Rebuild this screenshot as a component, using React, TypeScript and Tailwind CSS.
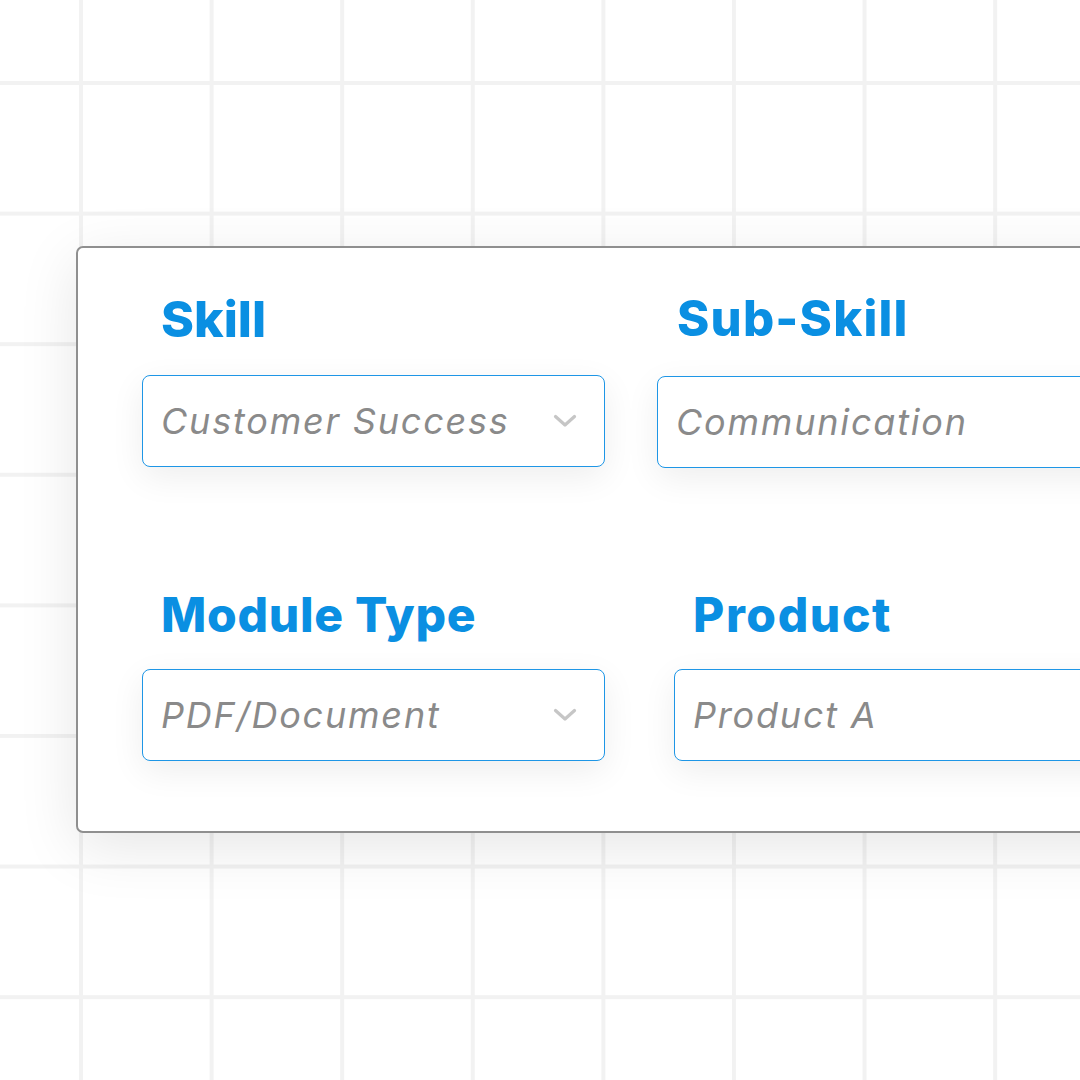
import React from "react";

const Chevron = () => (
  <svg width="24" height="14" viewBox="0 0 24 14" fill="none" className="shrink-0">
    <path d="M2.5 2.5 L12 11 L21.5 2.5" stroke="#c6c6c6" strokeWidth="3.2" strokeLinecap="round" strokeLinejoin="round" />
  </svg>
);

const Field = ({
  label,
  value,
  select,
  labelCls,
  gap,
  width,
}: {
  label: string;
  value: string;
  select?: boolean;
  labelCls: string;
  gap: string;
  width: string;
}) => (
  <div className={`flex flex-col shrink-0 ${width}`}>
    <h3 className={`font-extrabold leading-none text-[#0a8fe2] ${labelCls}`}>{label}</h3>
    <div
      className={`${gap} h-[92px] flex items-center justify-between pl-[18px] pr-[27px] bg-white border border-[#1e96e6] rounded-[8px] shadow-[0_10px_34px_rgba(0,0,0,0.07)]`}
    >
      <span className="italic text-[36px] tracking-[1.8px] text-[#8a8a8a] leading-none">{value}</span>
      {select && <Chevron />}
    </div>
  </div>
);

export default function App() {
  return (
    <div
      className="w-[1080px] h-[1080px] overflow-hidden bg-white pt-[246px] pl-[76px] font-['Inter','Liberation_Sans',sans-serif] bg-[linear-gradient(to_right,#f2f2f2_4px,transparent_4px),linear-gradient(to_bottom,#f2f2f2_4px,transparent_4px)] bg-[size:130.6px_130.6px] bg-[position:79px_81px]"
    >
      <div className="w-[1120px] h-[587px] bg-white border-2 border-solid border-[#8f8f8f] rounded-[7px] shadow-[0_14px_60px_rgba(0,0,0,0.10)] pt-[46px] pl-[64px]">
        <div className="flex">
          <Field label="Skill" value="Customer Success" select labelCls="text-[50px] pl-[19px]" gap="mt-[31px]" width="w-[463px]" />
          <div className="ml-[52px]">
            <Field label="Sub-Skill" value="Communication" labelCls="text-[49px] tracking-[1.2px] pl-[20px]" gap="mt-[33px]" width="w-[480px]" />
          </div>
        </div>
        <div className="flex mt-[123px]">
          <Field label="Module Type" value="PDF/Document" select labelCls="text-[48px] tracking-[0.7px] pl-[19px]" gap="mt-[30px]" width="w-[463px]" />
          <div className="ml-[69px]">
            <Field label="Product" value="Product A" labelCls="text-[48px] tracking-[1.6px] pl-[19px]" gap="mt-[30px]" width="w-[480px]" />
          </div>
        </div>
      </div>
    </div>
  );
}
